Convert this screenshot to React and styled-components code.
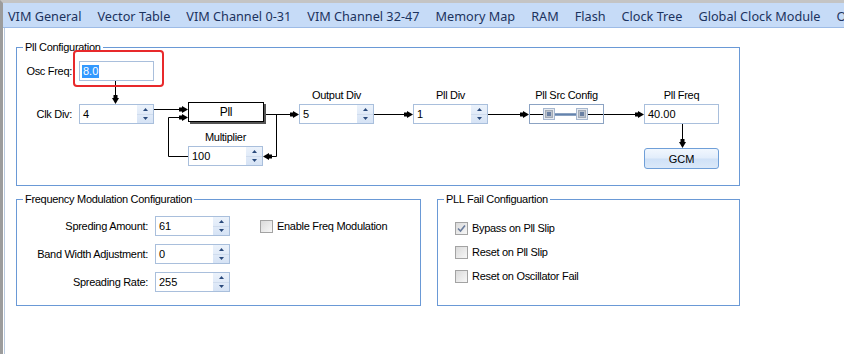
import React from "react";
import styled, { createGlobalStyle } from "styled-components";

const TABS = [
  "VIM General",
  "Vector Table",
  "VIM Channel 0-31",
  "VIM Channel 32-47",
  "Memory Map",
  "RAM",
  "Flash",
  "Clock Tree",
  "Global Clock Module",
  "Other",
];

// arrow head pointing right at (x, y), rotated for other directions
const ANGLES = { right: 0, down: 90, left: 180, up: 270 };

const Arrow = ({ x, y, dir = "right" }) => (
  <g transform={`rotate(${ANGLES[dir]} ${x} ${y})`}>
    <rect x={x - 9} y={y - 2} width={3} height={4} fill="#000" />
    <polygon points={`${x},${y} ${x - 6},${y - 3.5} ${x - 6},${y + 3.5}`} fill="#000" />
  </g>
);

const Connectors = () => (
  <Wires width="722" height="137">
    <g stroke="#000" strokeWidth="1" fill="none">
      <path d="M98.5 33 V54" />
      <path d="M137 61.5 H168" />
      <path d="M171 108.5 H151.5 V69.5 H168" />
      <path d="M248 66.5 H279" />
      <path d="M259.5 66.5 V108.5 H249" />
      <path d="M357 66.5 H393" />
      <path d="M471 66.5 H509" />
      <path d="M587 66.5 H624" />
      <path d="M665.5 76 V98" />
    </g>
    <Arrow x={98.5} y={56} dir="down" />
    <Arrow x={171} y={61.5} />
    <Arrow x={171} y={69.5} />
    <Arrow x={282} y={66.5} />
    <Arrow x={246} y={108.5} dir="left" />
    <Arrow x={396} y={66.5} />
    <Arrow x={512} y={66.5} />
    <Arrow x={627} y={66.5} />
    <Arrow x={665.5} y={100} dir="down" />
  </Wires>
);

const SpinArrow = ({ up }) => (
  <svg width="5" height="3" viewBox="0 0 5 3">
    <polygon points={up ? "0,3 2.5,0 5,3" : "0,0 5,0 2.5,3"} fill="#2a4a7c" />
  </svg>
);

const Spin = ({ value }) => (
  <SpinBox>
    <BoxValue>{value}</BoxValue>
    <SpinButtons>
      <SpinHalf>
        <SpinArrow up />
      </SpinHalf>
      <SpinHalf>
        <SpinArrow />
      </SpinHalf>
    </SpinButtons>
  </SpinBox>
);

const SrcSlider = () => (
  <SliderBox>
    <svg width="73" height="18" viewBox="0 0 73 18">
      <path d="M0 9.5 H13 M58 9.5 H73" stroke="#000" strokeWidth="1" />
      <path d="M19 9.5 H52" stroke="#6483ad" strokeWidth="2.5" />
      {[13, 46].map((x) => (
        <g key={x}>
          <rect x={x + 0.5} y={3.5} width={11} height={11} fill="#e6eaf0" stroke="#a7b8d0" />
          <rect x={x + 2.5} y={5.5} width={7} height={7} fill="#bcc3cd" stroke="#a3abb6" />
          <rect x={x + 4} y={7} width={4} height={4} fill="#6a80a3" />
        </g>
      ))}
    </svg>
  </SliderBox>
);

const Check = ({ checked, children }) => (
  <CheckRow>
    <CheckBox>
      {checked && (
        <svg width="9" height="9" viewBox="0 0 9 9">
          <path d="M1 4.5 L3.5 7 L8 1.5" stroke="#6a7c9c" strokeWidth="1.6" fill="none" />
        </svg>
      )}
    </CheckBox>
    <span>{children}</span>
  </CheckRow>
);

const App = () => {
  return (
    <Window>
      <GlobalStyle />
      <TabBar>
        {TABS.map((t) => (
          <Tab key={t}>{t}</Tab>
        ))}
      </TabBar>
      <Page>
        <Group $w={724} $h={139}>
          <GroupTitle>Pll Configuration</GroupTitle>
          <Connectors />

          <FieldRow $y={13}>
            <FieldLabel>Osc Freq:</FieldLabel>
            <TextBox>
              <Selected>8.0</Selected>
            </TextBox>
          </FieldRow>
          <FieldRow $y={56}>
            <FieldLabel>Clk Div:</FieldLabel>
            <Spin value="4" />
          </FieldRow>

          <Node $x={171} $y={54}>
            <PllBlock>Pll</PllBlock>
          </Node>
          <Node $x={171} $y={98}>
            <Caption>Multiplier</Caption>
            <Spin value="100" />
          </Node>
          <Node $x={282} $y={56}>
            <Caption>Output Div</Caption>
            <Spin value="5" />
          </Node>
          <Node $x={396} $y={56}>
            <Caption>Pll Div</Caption>
            <Spin value="1" />
          </Node>
          <Node $x={512} $y={56}>
            <Caption>Pll Src Config</Caption>
            <SrcSlider />
          </Node>
          <Node $x={627} $y={56}>
            <Caption>Pll Freq</Caption>
            <TextBox>
              <BoxValue>40.00</BoxValue>
            </TextBox>
          </Node>
          <Node $x={627} $y={100}>
            <GcmButton>GCM</GcmButton>
          </Node>

          <Highlight />
        </Group>

        <BottomRow>
          <Group $w={405} $h={107}>
            <GroupTitle>Frequency Modulation Configuration</GroupTitle>
            <FormGrid>
              <FormLabel>Spreding Amount:</FormLabel>
              <Spin value="61" />
              <CheckCell>
                <Check>Enable Freq Modulation</Check>
              </CheckCell>
              <FormLabel>Band Width Adjustment:</FormLabel>
              <Spin value="0" />
              <span />
              <FormLabel>Spreading Rate:</FormLabel>
              <Spin value="255" />
            </FormGrid>
          </Group>
          <Group $w={303} $h={107}>
            <GroupTitle>PLL Fail Configuartion</GroupTitle>
            <CheckList>
              <Check checked>Bypass on Pll Slip</Check>
              <Check>Reset on Pll Slip</Check>
              <Check>Reset on Oscillator Fail</Check>
            </CheckList>
          </Group>
        </BottomRow>
      </Page>
    </Window>
  );
};

const GlobalStyle = createGlobalStyle`
  html, body {
    margin: 0;
    padding: 0;
    background: #fff;
  }
  body {
    font-family: "Liberation Sans", Arial, sans-serif;
    font-size: 11px;
    color: #000;
  }
`;

const Window = styled.div`
  width: 844px;
  height: 354px;
  box-sizing: border-box;
  border-top: 3px solid #c4c4c4;
  border-left: 3px solid #9c9c9c;
  display: flex;
  flex-direction: column;
  overflow: hidden;
  background: #fff;
`;

const TabBar = styled.div`
  flex: none;
  height: 25px;
  box-sizing: border-box;
  padding: 2px 0 0 5px;
  display: flex;
  align-items: center;
  gap: 16px;
  background: #c6dbf7;
  border-bottom: 1px solid #9dbbe6;
  white-space: nowrap;
  overflow: hidden;
`;

const Tab = styled.span`
  flex: none;
  font-family: "Noto Sans", sans-serif;
  font-size: 12.7px;
  color: #1c335e;
`;

const Page = styled.div`
  flex: 1;
  margin-left: 1px;
  border-left: 1px solid #b9c9de;
  padding: 19px 0 0 11px;
  display: flex;
  flex-direction: column;
  gap: 13px;
  letter-spacing: -0.3px;
`;

const Group = styled.div`
  position: relative;
  box-sizing: border-box;
  flex: none;
  width: ${(p) => p.$w}px;
  height: ${(p) => p.$h}px;
  border: 1px solid #6a99d6;
`;

const GroupTitle = styled.span`
  position: absolute;
  top: -7px;
  left: 6px;
  padding: 0 2px;
  line-height: 13px;
  background: #fff;
  white-space: nowrap;
`;

const Wires = styled.svg`
  position: absolute;
  left: 0;
  top: 0;
  pointer-events: none;
`;

const Node = styled.div`
  position: absolute;
  left: ${(p) => p.$x}px;
  top: ${(p) => p.$y}px;
`;

const FieldRow = styled.div`
  position: absolute;
  left: 0;
  top: ${(p) => p.$y}px;
  display: flex;
  align-items: center;
  gap: 7px;
`;

const FieldLabel = styled.span`
  width: 55px;
  text-align: right;
  white-space: nowrap;
`;

const Caption = styled.div`
  position: absolute;
  left: -20px;
  right: -20px;
  bottom: calc(100% + 2px);
  text-align: center;
  line-height: 14px;
  white-space: nowrap;
`;

const SpinBox = styled.div`
  box-sizing: border-box;
  width: 75px;
  height: 20px;
  display: flex;
  border: 1px solid #a9bfdc;
  background: #fff;
`;

const BoxValue = styled.span`
  flex: 1;
  padding-left: 3px;
  line-height: 18px;
  letter-spacing: 0;
`;

const SpinButtons = styled.div`
  width: 16px;
  display: flex;
  flex-direction: column;
  background: linear-gradient(#ebf2fb, #d6e3f5);
`;

const SpinHalf = styled.div`
  flex: 1;
  display: flex;
  align-items: center;
  justify-content: center;

  & + & {
    border-top: 1px solid #cfdcee;
  }
`;

const TextBox = styled.div`
  box-sizing: border-box;
  width: 75px;
  height: 20px;
  display: flex;
  align-items: center;
  border: 1px solid #a9bfdc;
  background: #fff;
`;

const Selected = styled.span`
  margin-left: 2px;
  padding: 0 1px;
  line-height: 13px;
  background: #3399ff;
  color: #fff;
  letter-spacing: 0;
`;

const Highlight = styled.div`
  position: absolute;
  left: 56px;
  top: 2px;
  width: 91px;
  height: 37px;
  box-sizing: border-box;
  border: 2px solid #e8292b;
  border-radius: 4px;
  pointer-events: none;
`;

const PllBlock = styled.div`
  box-sizing: border-box;
  width: 76px;
  height: 20px;
  border: 1px solid #000;
  background: #fff;
  box-shadow: 2px 2px 0 #555;
  text-align: center;
  line-height: 18px;
  font-size: 12px;
`;

const SliderBox = styled.div`
  box-sizing: border-box;
  width: 75px;
  height: 20px;
  border: 1px solid #8ca3c3;
  background: #fff;
  display: flex;
`;

const GcmButton = styled.button`
  box-sizing: border-box;
  width: 75px;
  height: 21px;
  padding: 0;
  border: 1px solid #6f9fd8;
  border-radius: 3px;
  background: linear-gradient(#f1f7fe 0%, #e2edfb 48%, #cfe1f7 52%, #dbe9f9 100%);
  font-family: "Liberation Sans", Arial, sans-serif;
  font-size: 11px;
  color: #000;
`;

const BottomRow = styled.div`
  display: flex;
  gap: 16px;
`;

const FormGrid = styled.div`
  display: grid;
  grid-template-columns: 114px 75px auto;
  grid-auto-rows: 20px;
  column-gap: 7px;
  row-gap: 8px;
  align-items: center;
  padding: 16px 0 0 17px;
`;

const FormLabel = styled.span`
  text-align: right;
  white-space: nowrap;
`;

const CheckCell = styled.div`
  margin-left: 23px;
`;

const CheckList = styled.div`
  display: flex;
  flex-direction: column;
  gap: 8px;
  padding: 20px 0 0 17px;
`;

const CheckRow = styled.div`
  height: 16px;
  display: flex;
  align-items: center;
  gap: 4px;
  white-space: nowrap;
`;

const CheckBox = styled.span`
  flex: none;
  width: 13px;
  height: 13px;
  box-sizing: border-box;
  border: 1px solid #a3a3a3;
  background: linear-gradient(135deg, #dadada, #f7f7f7);
  display: flex;
  align-items: center;
  justify-content: center;
`;

export default App;
